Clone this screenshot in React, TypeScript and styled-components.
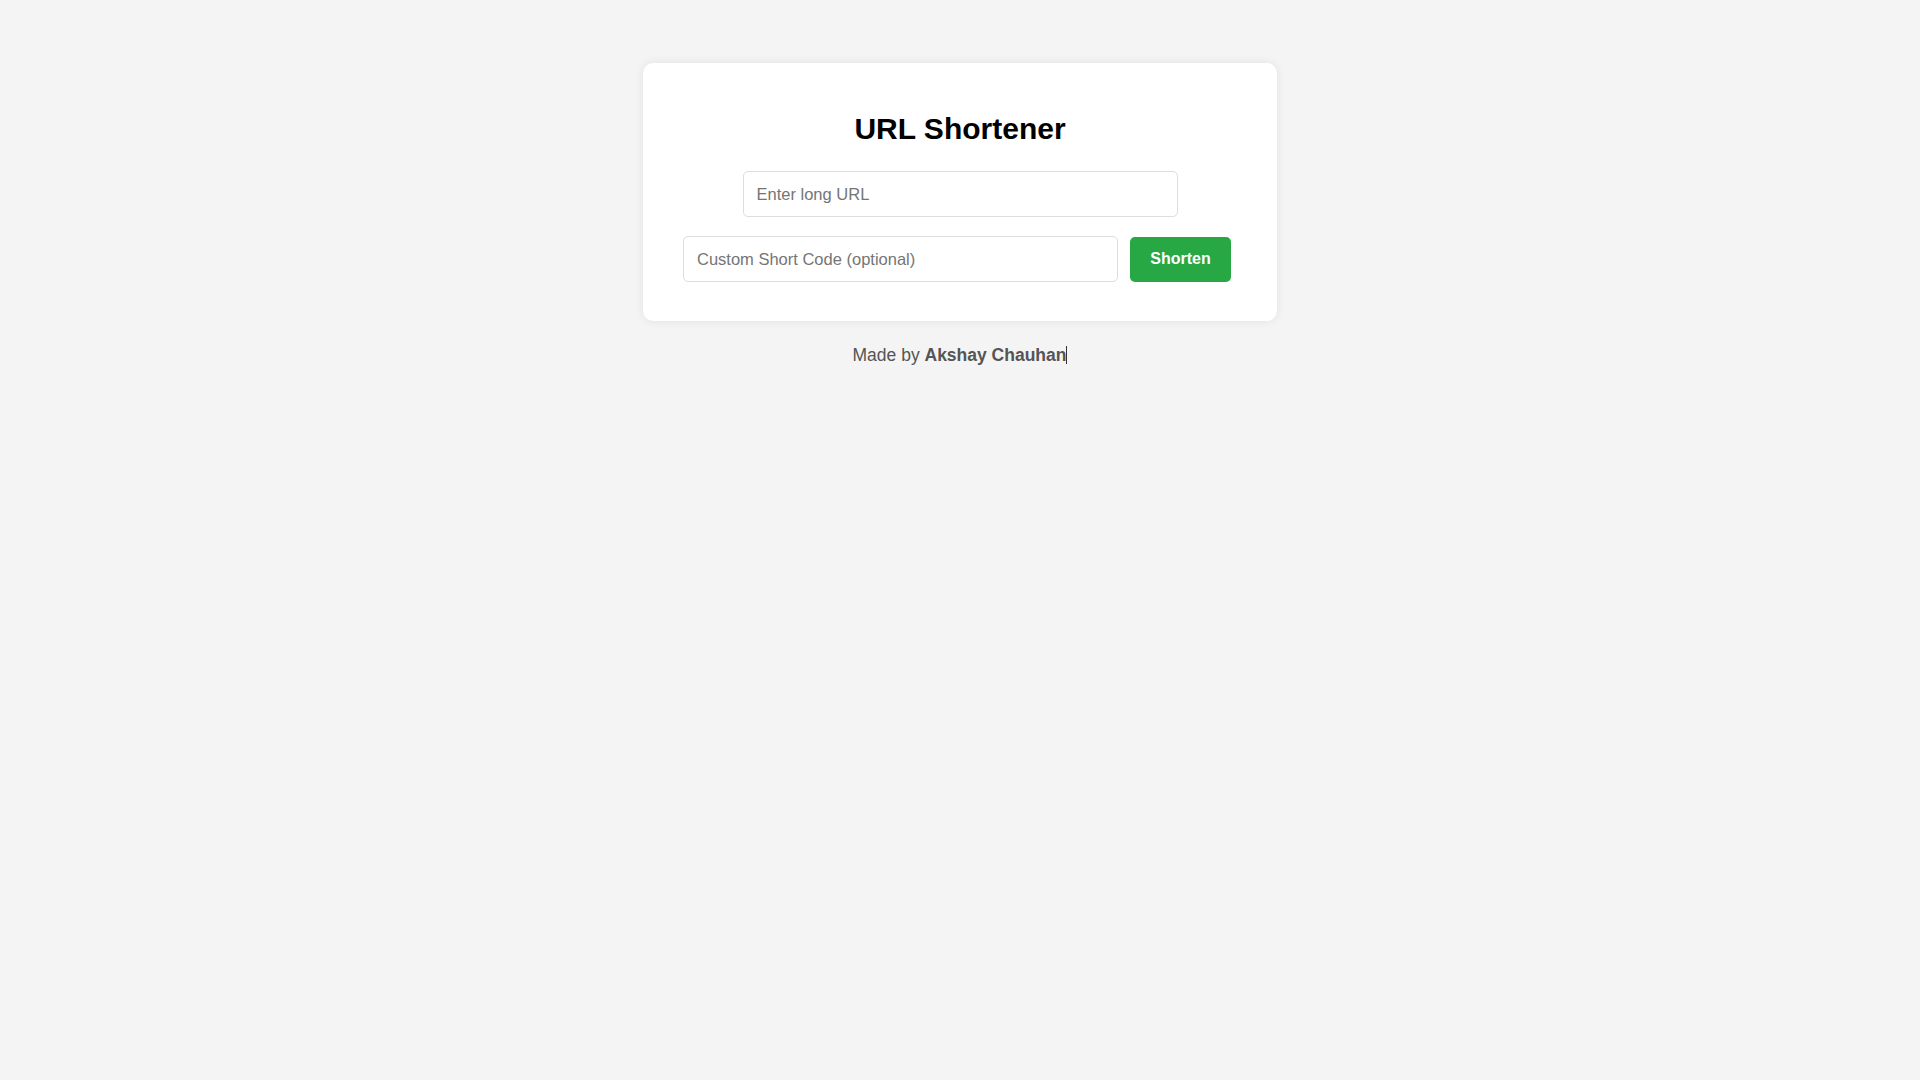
import styled, { createGlobalStyle } from 'styled-components'

const GlobalStyle = createGlobalStyle`
html, body {
  margin: 0;
  padding: 0;
  background: #f4f4f4;
  font-family: "Liberation Sans", Arial, sans-serif;
}
`

const Page = styled.div`
display: flex;
flex-direction: column;
align-items: center;
padding-top: 63px;
min-height: 100vh;
box-sizing: border-box;
`

const Card = styled.div`
width: 634px;
box-sizing: border-box;
background: #fff;
border-radius: 10px;
box-shadow: 0 0 10px rgba(0, 0, 0, 0.08);
padding: 49px 0 39px;
display: flex;
flex-direction: column;
align-items: center;
`

const Title = styled.h1`
margin: 0 0 25px;
font-size: 30px;
font-weight: bold;
color: #000;
line-height: 34px;
`

const Row = styled.div`
display: flex;
align-items: center;
gap: 12px;
padding-right: ${(p: { shift?: boolean }) => (p.shift ? '6px' : '0')};
margin-top: ${(p: { shift?: boolean }) => (p.shift ? '19px' : '0')};
`

const Field = styled.input`
width: 435px;
height: 46px;
box-sizing: border-box;
padding: 0 13px;
border: 1px solid #ddd;
border-radius: 5px;
font-family: "Liberation Sans", Arial, sans-serif;
font-size: 16.5px;
color: #333;
outline: none;
&::placeholder {
  color: #757575;
}
`

const Button = styled.button`
width: 101px;
height: 45px;
border: none;
border-radius: 5px;
background: #28a745;
color: #fff;
font-family: "Liberation Sans", Arial, sans-serif;
font-size: 16px;
font-weight: bold;
cursor: pointer;
`

const Footer = styled.p`
margin: 24px 0 0;
font-size: 17.5px;
line-height: 20px;
color: #555;
b {
  font-weight: bold;
}
`

const Caret = styled.span`
display: inline-block;
width: 1px;
height: 18px;
background: #333;
vertical-align: -3px;
`

export default function App() {
  return (
    <>
      <GlobalStyle />
      <Page>
        <Card>
          <Title>URL Shortener</Title>
          <Row>
            <Field type="text" placeholder="Enter long URL" />
          </Row>
          <Row shift>
            <Field type="text" placeholder="Custom Short Code (optional)" />
            <Button>Shorten</Button>
          </Row>
        </Card>
        <Footer>
          Made by <b>Akshay Chauhan</b>
          <Caret />
        </Footer>
      </Page>
    </>
  )
}
